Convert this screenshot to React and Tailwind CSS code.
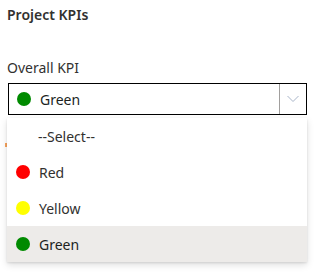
export default function App() {
  const opts = [
    { label: "Red", color: "#ff0000" },
    { label: "Yellow", color: "#ffff00" },
    { label: "Green", color: "#008a00" },
  ];
  return (
    <div className="w-[318px] h-[272px] bg-white relative overflow-hidden text-[#323130]" style={{ fontFamily: '"Segoe UI", "Noto Sans", sans-serif' }}>
      <div className="pl-[7px] pt-[5px] text-[14px] font-semibold leading-[20px] text-[#323130]">Project KPIs</div>
      <div className="pl-[7px] pt-[33px] text-[14px] leading-[20px]">Overall KPI</div>
      <div className="ml-[8px] mt-[5px] w-[299px] h-[32px] border border-black flex items-center">
        <div className="flex-1 flex items-center pl-[8px] gap-[9px]">
          <span className="w-[14px] h-[14px] rounded-full bg-[#008a00]" />
          <span className="text-[14px] text-[#201f1e]">Green</span>
        </div>
        <div className="w-px h-full bg-[#a19f9d]" />
        <div className="w-[26px] flex items-center justify-center">
          <svg width="12" height="8" viewBox="0 0 12 8" fill="none">
            <path d="M0.5 1 L6 6.5 L11.5 1" stroke="#a8b4c8" strokeWidth="1" />
          </svg>
        </div>
      </div>
      <div className="absolute left-[5px] top-[143px] w-[2px] h-[4px] bg-[#f7a35c]" />
      <div className="absolute left-[7px] top-[118px] w-[300px] bg-white shadow-[0_3px_7px_rgba(0,0,0,0.13),0_1px_2px_rgba(0,0,0,0.1)]">
        <div className="h-[36px] flex items-center pl-[31px] text-[14px] text-[#323130]">--Select--</div>
        {opts.map((o) => (
          <div key={o.label} className={`h-[36px] flex items-center pl-[9px] gap-[9px] text-[14px] ${o.label === "Green" ? "bg-[#edebe9] text-[#201f1e]" : "text-[#323130]"}`}>
            <span className="w-[14px] h-[14px] rounded-full" style={{ background: o.color }} />
            <span>{o.label}</span>
          </div>
        ))}
      </div>
    </div>
  );
}
